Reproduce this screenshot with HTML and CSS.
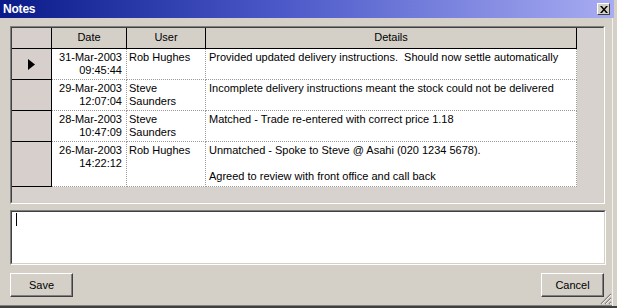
FILE: index.html
```html
<!DOCTYPE html>
<html>
<head>
<meta charset="utf-8">
<link rel="stylesheet" href="styles.css">
</head>
<body>
<div class="window">
  <div class="titlebar">
    <span class="title">Notes</span>
    <span class="close"><svg width="8" height="7" viewBox="0 0 8 7"><path d="M0 0h2l2 2.5L6 0h2L5 3.5 8 7H6L4 4.5 2 7H0l3-3.5z" fill="#000"/></svg></span>
  </div>
  <div class="content">
    <div class="frame grid-frame">
      <div class="frame-inner">
        <div class="grid">
          <div class="hd sel"></div>
          <div class="hd">Date</div>
          <div class="hd">User</div>
          <div class="hd">Details</div>

          <div class="sel current"><svg width="7" height="11" viewBox="0 0 7 11"><path d="M0 0L7 5.5L0 11z" fill="#000"/></svg></div>
          <div class="cell date">31-Mar-2003<br>09:45:44</div>
          <div class="cell user">Rob Hughes</div>
          <div class="cell details">Provided updated delivery instructions.  Should now settle automatically</div>

          <div class="sel"></div>
          <div class="cell date">29-Mar-2003<br>12:07:04</div>
          <div class="cell user">Steve<br>Saunders</div>
          <div class="cell details">Incomplete delivery instructions meant the stock could not be delivered</div>

          <div class="sel"></div>
          <div class="cell date">28-Mar-2003<br>10:47:09</div>
          <div class="cell user">Steve<br>Saunders</div>
          <div class="cell details">Matched - Trade re-entered with correct price 1.18</div>

          <div class="sel tall"></div>
          <div class="cell date tall">26-Mar-2003<br>14:22:12</div>
          <div class="cell user tall">Rob Hughes</div>
          <div class="cell details tall">Unmatched - Spoke to Steve @ Asahi (020 1234 5678).<br><br>Agreed to review with front office and call back</div>
        </div>
      </div>
    </div>
    <div class="frame memo-frame">
      <div class="frame-inner memo"><span class="caret"></span></div>
    </div>
    <div class="buttons">
      <button class="btn">Save</button>
      <button class="btn">Cancel</button>
    </div>
  </div>
  <svg class="grip" width="12" height="12" viewBox="0 0 12 12">
    <path d="M11 1L1 11M11 5L5 11M11 9L9 11" stroke="#808080" stroke-width="1.2"/>
    <path d="M11 2L2 11M11 6L6 11M11 10L10 11" stroke="#fff" stroke-width="0.8"/>
  </svg>
</div>
</body>
</html>
```
FILE: styles.css
```css
html, body {
  margin: 0;
  padding: 0;
}
body {
  width: 617px;
  height: 308px;
  overflow: hidden;
  background: #d4d0c8;
  font-family: "Liberation Sans", Arial, sans-serif;
  font-size: 11px;
  color: #000;
}
.window {
  position: relative;
  width: 617px;
  height: 308px;
  box-sizing: border-box;
  background: #d4d0c8;
  border-bottom: 2px solid #404040;
  box-shadow: inset -4px 0 0 #d4d0c8, inset -5px 0 0 #f4f2ee, inset 0 -1px 0 #808080;
}
.titlebar {
  height: 18px;
  margin-right: 3px;
  background: linear-gradient(to right, #0a1a88 0%, #4a58c8 45%, #a8acf2 100%);
  display: flex;
  align-items: center;
  justify-content: space-between;
  padding: 0 3px 0 3px;
}
.title {
  color: #fff;
  font-weight: bold;
  font-size: 12px;
  letter-spacing: -0.2px;
}
.close {
  width: 11px;
  height: 10px;
  background: #d4d0c8;
  border-top: 1px solid #fff;
  border-left: 1px solid #fff;
  border-right: 1px solid #404040;
  border-bottom: 1px solid #404040;
  display: flex;
  align-items: center;
  justify-content: center;
  margin-right: 1px;
}
.content {
  padding: 8px 0 0 10px;
}
.frame {
  border-top: 1px solid #808080;
  border-left: 1px solid #808080;
  border-right: 1px solid #fff;
  border-bottom: 1px solid #fff;
  box-sizing: border-box;
}
.frame-inner {
  border-top: 1px solid #404040;
  border-left: 1px solid #404040;
  border-right: 1px solid #d4d0c8;
  border-bottom: 1px solid #d4d0c8;
  box-sizing: border-box;
  height: 100%;
}
.grid-frame {
  width: 595px;
  height: 178px;
}
.grid-frame .frame-inner {
  background: #d8d2ce;
}
.grid {
  display: grid;
  grid-template-columns: 40px 75px 79px 371px;
  grid-template-rows: 21px 31px 31px 31px 45px;
  width: 565px;
}
.grid > div {
  box-sizing: border-box;
}
.hd {
  background: #d4d0c8;
  border-right: 1px solid #000;
  border-bottom: 1px solid #000;
  text-align: center;
  line-height: 19px;
}
.sel {
  background: #d6cfcc;
  border-right: 1px solid #000;
  border-bottom: 1px solid #000;
  display: flex;
  align-items: center;
  justify-content: center;
}
.cell {
  background: #fff;
  border-right: 1px dotted #9a9a9a;
  border-bottom: 1px dotted #9a9a9a;
  line-height: 13px;
  padding-top: 2px;
  white-space: pre-wrap;
}
.date {
  text-align: right;
  padding-right: 4px;
}
.user {
  padding-left: 2px;
}
.details {
  padding-left: 3px;
}
.memo-frame {
  margin-top: 6px;
  width: 596px;
  height: 55px;
}
.memo {
  background: #fff;
  padding: 1px 0 0 4px;
}
.caret {
  display: block;
  width: 1px;
  height: 13px;
  background: #000;
}
.buttons {
  margin-top: 8px;
  width: 594px;
  display: flex;
  justify-content: space-between;
}
.btn {
  width: 63px;
  height: 24px;
  box-sizing: border-box;
  background: #d4d0c8;
  font-family: "Liberation Sans", Arial, sans-serif;
  font-size: 11px;
  color: #000;
  padding: 0;
  border-top: 1px solid #fff;
  border-left: 1px solid #fff;
  border-right: 1px solid #404040;
  border-bottom: 1px solid #404040;
  box-shadow: inset -1px -1px 0 #808080;
}
.grip {
  position: absolute;
  right: 5px;
  bottom: 1px;
}
```
